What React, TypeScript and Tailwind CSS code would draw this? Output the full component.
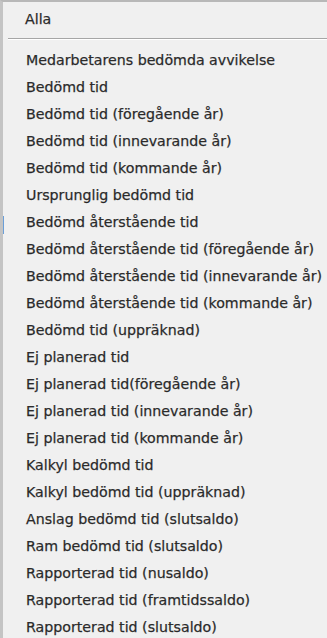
import React from 'react';

const items = [
  'Medarbetarens bedömda avvikelse',
  'Bedömd tid',
  'Bedömd tid (föregående år)',
  'Bedömd tid (innevarande år)',
  'Bedömd tid (kommande år)',
  'Ursprunglig bedömd tid',
  'Bedömd återstående tid',
  'Bedömd återstående tid (föregående år)',
  'Bedömd återstående tid (innevarande år)',
  'Bedömd återstående tid (kommande år)',
  'Bedömd tid (uppräknad)',
  'Ej planerad tid',
  'Ej planerad tid(föregående år)',
  'Ej planerad tid (innevarande år)',
  'Ej planerad tid (kommande år)',
  'Kalkyl bedömd tid',
  'Kalkyl bedömd tid (uppräknad)',
  'Anslag bedömd tid (slutsaldo)',
  'Ram bedömd tid (slutsaldo)',
  'Rapporterad tid (nusaldo)',
  'Rapporterad tid (framtidssaldo)',
  'Rapporterad tid (slutsaldo)',
];

export default function App() {
  return (
    <div className="relative w-[327px] h-[638px] overflow-hidden bg-[#f0f0f0] border-l-[3px] border-t-[2px] border-l-[#c4c4c4] border-t-[#b8b8b8] text-[#262626] text-[14.2px] leading-none [-webkit-text-stroke:0.25px_#3a3a3a]" style={{ fontFamily: '"DejaVu Sans", Verdana, sans-serif' }}>
      {/* sliver of the parent's selection behind the menu */}
      <div className="absolute left-0 top-[214px] w-[1px] h-[18px] bg-[#6b9fd8]" />

      <div className="flex items-center h-[34px] pl-[22px]">Alla</div>
      <div className="ml-[5px] mt-[2px] h-px bg-[#a6a6a6]" />
      <div className="ml-[5px] h-px bg-white" />

      <ul className="flex flex-col pt-[7px]">
        {items.map((t) => (
          <li key={t} className="flex items-center h-[27px] pl-[23px] whitespace-nowrap">
            {t}
          </li>
        ))}
      </ul>
    </div>
  );
}
